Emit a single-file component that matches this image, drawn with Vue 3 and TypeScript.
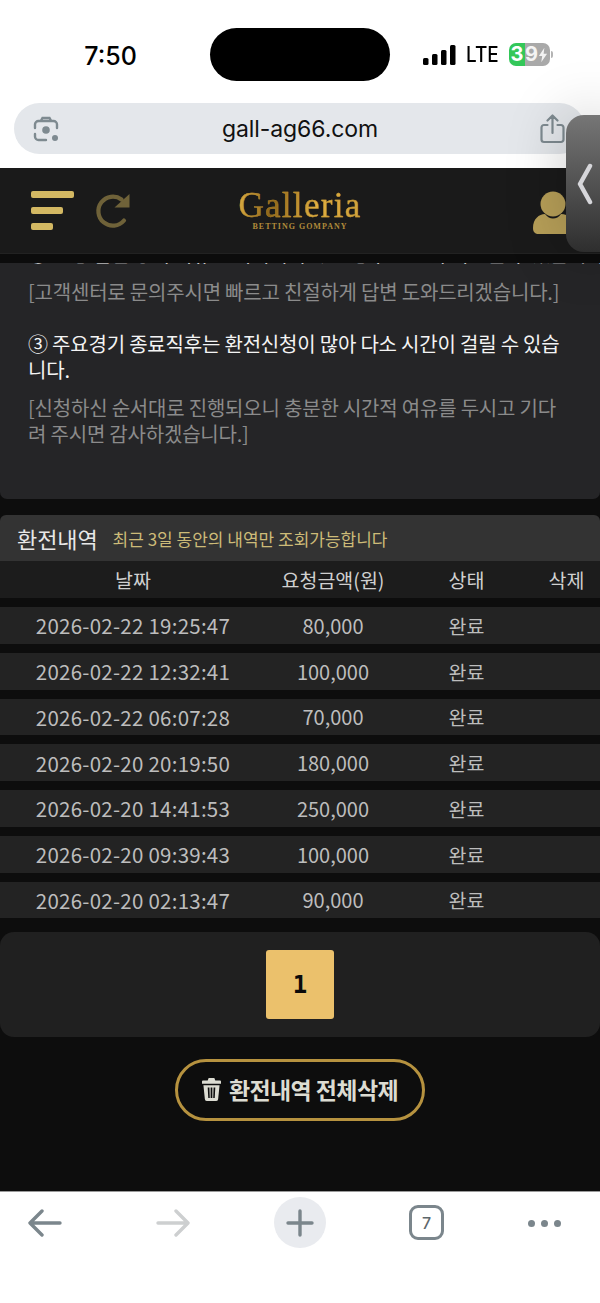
<script setup lang="ts">
interface Row { date: string; amount: string; status: string }
const rows: Row[] = [
  { date: '2026-02-22 19:25:47', amount: '80,000', status: '완료' },
  { date: '2026-02-22 12:32:41', amount: '100,000', status: '완료' },
  { date: '2026-02-22 06:07:28', amount: '70,000', status: '완료' },
  { date: '2026-02-20 20:19:50', amount: '180,000', status: '완료' },
  { date: '2026-02-20 14:41:53', amount: '250,000', status: '완료' },
  { date: '2026-02-20 09:39:43', amount: '100,000', status: '완료' },
  { date: '2026-02-20 02:13:47', amount: '90,000', status: '완료' },
]
</script>

<template>
  <div class="screen">
    <div class="chrome-top">
      <div class="status">
        <span class="time">7:50</span>
        <span class="island"></span>
        <div class="status-right">
          <svg class="signal" width="33" height="20" viewBox="0 0 33 20"><rect x="0" y="13" width="5.5" height="7" rx="1.5"/><rect x="9" y="9" width="5.5" height="11" rx="1.5"/><rect x="18" y="5" width="5.5" height="15" rx="1.5"/><rect x="27" y="0" width="5.5" height="20" rx="1.5"/></svg>
          <span class="lte">LTE</span>
          <div class="battery">
            <span class="bat-green">3</span><span class="bat-grey">9<svg width="10" height="16" viewBox="0 0 11 16"><path d="M7 0 1 9h3.6L3.6 16 10 6.6H6.2Z" fill="#f2f2f2"/></svg></span>
          </div>
          <span class="bat-tip"></span>
        </div>
      </div>
      <div class="address">
        <svg width="28" height="28" viewBox="0 0 28 28" fill="none" stroke="#7e8a90" stroke-width="2.4" stroke-linecap="round"><path d="M9 5.500 10.500 3h7L19 5.500M3 13V9.500A3.500 3.500 0 0 1 6.500 6h15A3.500 3.500 0 0 1 25 9.500V13M3 19v2.500A3.500 3.500 0 0 0 6.500 25H14"/><circle cx="14" cy="15" r="3.800" fill="#7e8a90" stroke="none"/><circle cx="23" cy="23" r="3" fill="#7e8a90" stroke="none"/></svg>
        <span class="url">gall-ag66.com</span>
        <svg width="25" height="30" viewBox="0 0 25 30" fill="none" stroke="#7e8a90" stroke-width="2.200" stroke-linecap="round" stroke-linejoin="round"><path d="M7.500 11H4a2.500 2.500 0 0 0-2.500 2.500v12A2.500 2.500 0 0 0 4 28h17a2.500 2.500 0 0 0 2.500-2.500v-12A2.500 2.500 0 0 0 21 11h-3.500M12.500 19V2M7.500 6.500l5-5 5 5"/></svg>
      </div>
    </div>

    <header class="site-head">
      <div class="head-left">
        <div class="menu"><i class="b1"></i><i class="b2"></i><i class="b3"></i></div>
        <svg class="refresh" width="36" height="36" viewBox="0 0 36 36" fill="none"><path d="M29 27.500A14.500 14.500 0 1 1 26.500 6.500" stroke="#6f6239" stroke-width="4.200" stroke-linecap="round"/><path d="M34.500 1v13.500H19.500Z" fill="#6f6239"/></svg>
      </div>
      <div class="logo">
        <span class="logo-main">Galleria</span>
        <span class="logo-sub">BETTING GOMPANY</span>
      </div>
      <svg class="person" width="46" height="44" viewBox="0 0 46 44" fill="#b79f58"><circle cx="20" cy="13" r="12.500"/><path d="M0 37c0-9 6-14 12-14 2.500 3 5 4.500 8 4.500s6-1.500 8-4.500c7 0 14 5 14 14 0 4-2 6-6 6H6c-4 0-6-2-6-6Z"/></svg>
    </header>
    <div class="strip"></div>

    <section class="notice">
      <p class="white clipped">② 은행 점검 등의 이유로 처리되지 않은 경우 환전이 지연될 수 있습니다.</p>
      <p class="gray">[고객센터로 문의주시면 빠르고 친절하게 답변 도와드리겠습니다.]</p>
      <p class="white spaced">③ 주요경기 종료직후는 환전신청이 많아 다소 시간이 걸릴 수 있습<br>니다.</p>
      <p class="gray">[신청하신 순서대로 진행되오니 충분한 시간적 여유를 두시고 기다<br>려 주시면 감사하겠습니다.]</p>
    </section>

    <section class="history">
      <div class="title-bar">
        <span class="title">환전내역</span>
        <span class="hint">최근 3일 동안의 내역만 조회가능합니다</span>
      </div>
      <div class="row head-row">
        <span>날짜</span><span>요청금액(원)</span><span>상태</span><span>삭제</span>
      </div>
      <div class="row data-row" v-for="r in rows" :key="r.date">
        <span class="date">{{ r.date }}</span><span class="amount">{{ r.amount }}</span><span>{{ r.status }}</span><span></span>
      </div>
    </section>

    <div class="pager"><button class="page-btn">1</button></div>

    <div class="del-wrap">
      <button class="del-btn">
        <svg width="19" height="23" viewBox="0 0 20 24" fill="#dcdcd2"><path d="M7 0h6l1 2.500h5A1 1 0 0 1 20 3.500V6H0V3.500a1 1 0 0 1 1-1h5Z"/><path d="M1.500 7.500h17L17 22a2 2 0 0 1-2 2H5a2 2 0 0 1-2-2ZM6 10l.6 11h1.600L7.800 10Zm3.100 0v11h1.800V10Zm3.100 0-.4 11h1.600l.6-11Z" fill-rule="evenodd"/></svg>
        <span class="del-label">환전내역 전체삭제</span>
      </button>
    </div>
    <div class="filler"></div>

    <nav class="chrome-bottom">
      <svg width="34" height="28" viewBox="0 0 34 28" fill="none" stroke="#7b868c" stroke-width="3.400" stroke-linecap="round" stroke-linejoin="round"><path d="M32 14H3M14 2 2 14l12 12"/></svg>
      <svg width="34" height="28" viewBox="0 0 34 28" fill="none" stroke="#cdcfd0" stroke-width="3.400" stroke-linecap="round" stroke-linejoin="round"><path d="M2 14h29M20 2l12 12-12 12"/></svg>
      <span class="plus"><svg width="28" height="28" viewBox="0 0 28 28" stroke="#7b868c" stroke-width="3.400" stroke-linecap="round"><path d="M14 2v24M2 14h24"/></svg></span>
      <span class="tabs">7</span>
      <span class="dots"><i></i><i></i><i></i></span>
    </nav>

    <div class="side-tab">
      <svg width="16" height="42" viewBox="0 0 16 42" fill="none" stroke="#d6d6da" stroke-width="4.500" stroke-linecap="round" stroke-linejoin="round"><path d="M13 3 3 21l10 18"/></svg>
    </div>
  </div>
</template>

<style scoped>
.screen {
  position: relative;
  width: 600px;
  height: 1303px;
  overflow: hidden;
  display: flex;
  flex-direction: column;
  background: #0d0d0d;
  font-family: "Noto Sans CJK KR", "Noto Sans", sans-serif;
}
.chrome-top {
  height: 168px;
  flex: none;
  background: #fff;
  display: flex;
  flex-direction: column;
  padding: 28px 14px 0;
  box-sizing: border-box;
}
.status {
  height: 53px;
  display: flex;
  align-items: center;
  position: relative;
}
.time {
  width: 193px;
  padding-top: 2px;
  text-align: center;
  box-sizing: border-box;
  font: 550 25px Inter, sans-serif;
  color: #000;
}
.island {
  width: 180px;
  height: 53px;
  margin-left: 3px;
  border-radius: 27px;
  background: #000;
}
.status-right {
  display: flex;
  align-items: center;
  margin-left: 33px;
}
.signal { fill: #000; }
.lte {
  font: 500 21px Inter, sans-serif;
  color: #000;
  margin-left: 10px;
  width: 33px;
  transform: scaleX(.9);
  transform-origin: left center;
}
.battery {
  margin-left: 10px;
  width: 41px;
  height: 23px;
  border-radius: 7px;
  overflow: hidden;
  display: flex;
  font: 700 20px/23px Inter, sans-serif;
  color: #f4f4f4;
}
.bat-green {
  width: 16px;
  background: #33c759;
  text-align: center;
  color: #fff;
}
.bat-grey {
  flex: 1;
  background: #a9a9a9;
  display: flex;
  align-items: center;
}
.bat-tip {
  width: 2px;
  height: 7px;
  margin-left: 1px;
  background: #b4b4b4;
  border-radius: 0 2px 2px 0;
}
.address {
  margin-top: 22px;
  height: 51px;
  width: 571px;
  border-radius: 26px;
  background: #e4e7eb;
  display: flex;
  align-items: center;
  justify-content: space-between;
  padding: 0 20px 0 18px;
  box-sizing: border-box;
}
.url {
  font: 400 23px Inter, sans-serif;
  letter-spacing: -.1px;
  color: #111;
}
.site-head {
  height: 85px;
  flex: none;
  background: #1a1a1a;
  display: flex;
  align-items: center;
  justify-content: space-between;
  padding: 0 0 0 31px;
  position: relative;
}
.head-left {
  display: flex;
  align-items: center;
  gap: 21px;
}
.menu {
  display: flex;
  flex-direction: column;
  gap: 9px;
}
.menu i {
  display: block;
  height: 7px;
  border-radius: 2px;
  background: #d3b863;
}
.b1 { width: 43px; }
.b2 { width: 32px; }
.b3 { width: 22px; }
.logo {
  position: absolute;
  left: 200px;
  width: 200px;
  top: 19px;
  display: flex;
  flex-direction: column;
  align-items: center;
}
.logo-main {
  font: 400 35px/37px "Liberation Serif", serif;
  letter-spacing: 1.300px;
  background: linear-gradient(100deg, #e2b144 0%, #8c6418 28%, #e0ae40 62%, #cfa03a 100%);
  -webkit-background-clip: text;
  background-clip: text;
  color: transparent;
  -webkit-text-stroke: .35px rgba(190, 145, 50, .85);
}
.logo-sub {
  font: 700 8px/10px "Liberation Serif", serif;
  letter-spacing: 1px;
  color: #b08a3a;
  margin-top: -2px;
}
.person {
  position: absolute;
  left: 533px;
  top: 23px;
}
.strip {
  height: 10px;
  flex: none;
  background: linear-gradient(#222 0 1px, #0c0c0c 1px);
}
.notice {
  height: 236px;
  flex: none;
  box-sizing: border-box;
  overflow: hidden;
  display: flex;
  flex-direction: column;
  justify-content: flex-end;
  padding: 0 0 52px 28px;
  background: #252527;
  border-radius: 0 0 7px 7px;
  font-size: 20px;
  line-height: 26px;
  letter-spacing: -.2px;
  white-space: nowrap;
}
.notice p {
  margin: 0;
  flex: none;
}
.white { color: #f4f4f4; }
.gray { color: #8b8b8b; margin-top: 12px !important; }
.spaced { margin-top: 26px !important; }
.history {
  margin-top: 16px;
  flex: none;
}
.title-bar {
  height: 46px;
  background: #333;
  border-radius: 6px 6px 0 0;
  display: flex;
  align-items: center;
  padding-left: 17px;
  gap: 15px;
  white-space: nowrap;
}
.title {
  color: #e8e8e8;
  font-size: 22px;
  letter-spacing: -.1px;
}
.hint {
  color: #cdbb78;
  font-size: 17px;
}
.row {
  display: grid;
  grid-template-columns: 266px 134px 133px 67px;
  align-items: center;
  text-align: center;
  font-size: 19.500px;
  white-space: nowrap;
}
.head-row {
  height: 37px;
  background: #1c1c1c;
  color: #d0d0d0;
  margin-bottom: 9px;
}
.data-row {
  height: 36.750px;
  background: #232323;
  color: #bdbdbd;
  margin-bottom: 9px;
}
.date {
  font-size: 20.500px;
  letter-spacing: .25px;
}
.amount {
  font-size: 20px;
}
.pager {
  margin-top: 5px;
  height: 105px;
  flex: none;
  background: #202020;
  border-radius: 14px;
  display: flex;
  justify-content: center;
  align-items: center;
}
.page-btn {
  width: 68px;
  height: 69px;
  border: 0;
  padding: 0;
  border-radius: 3px;
  background: #ebc16c;
  color: #0a0a0a;
  font: 700 24px "DejaVu Sans Mono", monospace;
}
.del-wrap {
  margin-top: 22px;
  display: flex;
  justify-content: center;
  flex: none;
}
.del-btn {
  width: 250px;
  height: 62px;
  box-sizing: border-box;
  border: 3px solid #b6923f;
  border-radius: 31px;
  background: #0d0d0d;
  color: #dcdcd2;
  font: 700 23px "Noto Sans CJK KR", sans-serif;
  letter-spacing: -.6px;
  display: flex;
  align-items: center;
  justify-content: center;
  gap: 8px;
  padding: 0 0 2px;
  white-space: nowrap;
}
.filler { flex: 1; }
.chrome-bottom {
  height: 112px;
  flex: none;
  background: #fff;
  border-top: 1px solid #9a9a9a;
  box-sizing: border-box;
  display: flex;
  align-items: flex-start;
  padding-top: 5px;
  position: relative;
}
.chrome-bottom > svg:nth-child(1) { margin: 12px 0 0 28px; }
.chrome-bottom > svg:nth-child(2) { margin: 12px 0 0 94px; }
.plus {
  margin-left: 84px;
  width: 52px;
  height: 51px;
  border-radius: 50%;
  background: #e9ebef;
  display: flex;
  align-items: center;
  justify-content: center;
}
.tabs {
  margin: 8px 0 0 83px;
  width: 35px;
  height: 35px;
  box-sizing: border-box;
  border: 3px solid #7b868c;
  border-radius: 9px;
  display: flex;
  align-items: center;
  justify-content: center;
  font: 500 16px Inter, sans-serif;
  color: #5d676c;
}
.dots {
  margin: 23px 0 0 84px;
  display: flex;
  gap: 6px;
}
.dots i {
  width: 7px;
  height: 7px;
  border-radius: 50%;
  background: #7b868c;
}
.side-tab {
  position: absolute;
  left: 566px;
  top: 115px;
  width: 50px;
  height: 137px;
  border-radius: 18px;
  background: linear-gradient(#767676, #2e2e2e);
  box-shadow: 0 0 60px rgba(0, 0, 0, .22);
  display: flex;
  align-items: center;
  padding-left: 11px;
  box-sizing: border-box;
}
</style>
